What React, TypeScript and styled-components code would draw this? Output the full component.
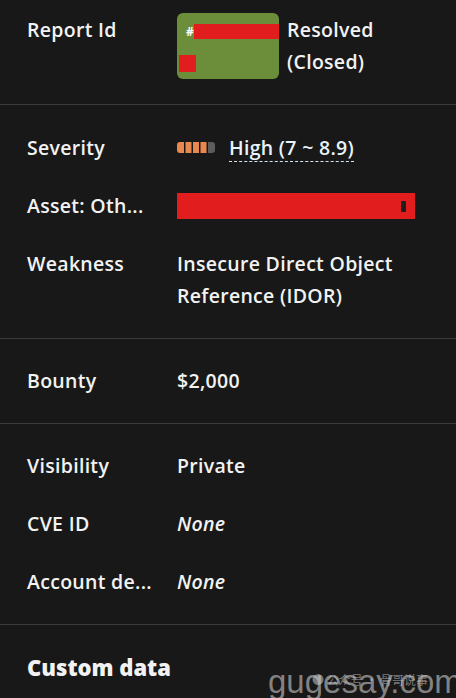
import React from "react";
import styled, { createGlobalStyle } from "styled-components";

const Global = createGlobalStyle`
  html, body { margin: 0; padding: 0; background: #181818; }
  body { font-family: "Open Sans", Lato, sans-serif; color: #f2f2f2; }
  * { box-sizing: border-box; }
`;

const Page = styled.div`
  position: relative;
  width: 456px;
  height: 698px;
  overflow: hidden;
  background: #181818;
`;

const Section = styled.div<{ $top?: number; $bottom?: number }>`
  display: flex;
  flex-direction: column;
  gap: 26px;
  padding: ${(p) => p.$top ?? 27}px 27px ${(p) => p.$bottom ?? 26}px 27px;
  border-bottom: 1px solid #3b3b3b;
  &:last-child { border-bottom: none; }
`;

const Row = styled.div`
  display: flex;
  align-items: flex-start;
  font-size: 19.5px;
  line-height: 32px;
  font-weight: 600;
  letter-spacing: 0.3px;
`;

const Label = styled.div<{ $pt?: number }>`
  width: 150px;
  flex: none;
  padding-top: ${(p) => p.$pt ?? 0}px;
  white-space: nowrap;
`;

const Value = styled.div<{ $italic?: boolean }>`
  flex: 1;
  font-style: ${(p) => (p.$italic ? "italic" : "normal")};
  display: flex;
  align-items: center;
  gap: 14px;
`;

const Badge = styled.div`
  width: 102px;
  height: 66px;
  background: #6c8e3a;
  border-radius: 6px;
  display: flex;
  flex-direction: column;
  padding: 11px 3px 7px 2px;
  gap: 16px;
`;

const IdLine = styled.div`
  display: flex;
  align-items: center;
  height: 15px;
  padding-left: 7px;
  font-size: 12px;
  font-weight: 700;
  color: #fff;
`;

const Redact = styled.div<{ $w: number; $h: number }>`
  width: ${(p) => p.$w}px;
  height: ${(p) => p.$h}px;
  background: #e21d1d;
  flex: none;
`;

const StatusText = styled.div`
  margin-left: 8px;
  padding-top: 1px;
  line-height: 32px;
`;

const Dashed = styled.span`
  color: #e8f3fb;
  line-height: 24px;
  padding-top: 4px;
  padding-bottom: 1px;
  border-bottom: 1px dashed #d8e4ee;
`;

const AssetBar = styled.div`
  width: 238px;
  height: 26px;
  margin-top: 3px;
  background: #e21d1d;
  display: flex;
  align-items: center;
  justify-content: flex-end;
  padding-right: 9px;
`;

const Notch = styled.div`
  width: 5px;
  height: 11px;
  border-radius: 1px;
  background: #1e1e1e;
`;

const Heading = styled.div`
  font-size: 22px;
  font-weight: 800;
  line-height: 32px;
`;

const Watermark = styled.div`
  position: absolute;
  left: 268px;
  bottom: -3px;
  font-family: "Liberation Sans", Arial, sans-serif;
  font-size: 33px;
  color: rgba(150, 150, 150, 0.85);
  white-space: nowrap;
`;

const WeChat = styled.div`
  position: absolute;
  left: 312px;
  top: 671px;
  display: flex;
  align-items: center;
  gap: 4px;
  font-family: "Noto Sans CJK SC", sans-serif;
  font-size: 12px;
  color: rgba(210, 210, 210, 0.55);
  white-space: nowrap;
`;

const SeverityIcon = () => (
  <svg width="38" height="11" viewBox="0 0 38 11">
    <rect x="0" y="0" width="7" height="11" rx="3" fill="#e8884e" />
    <rect x="3" y="0" width="4" height="11" fill="#e8884e" />
    <rect x="8.5" y="0" width="6" height="11" fill="#e8884e" />
    <rect x="16" y="0" width="6" height="11" fill="#e8884e" />
    <rect x="23.5" y="0" width="6" height="11" fill="#e8884e" />
    <rect x="31" y="0" width="7" height="11" rx="3" fill="#5c5c5c" />
    <rect x="31" y="0" width="4" height="11" fill="#5c5c5c" />
  </svg>
);

export default function App() {
  return (
    <Page>
      <Global />
      <Section $top={13} $bottom={25}>
        <Row>
          <Label $pt={1}>Report Id</Label>
          <Badge>
            <IdLine>
              #<Redact $w={85} $h={15} />
            </IdLine>
            <Redact $w={17} $h={17} />
          </Badge>
          <StatusText>
            Resolved
            <br />
            (Closed)
          </StatusText>
        </Row>
      </Section>
      <Section>
        <Row>
          <Label>Severity</Label>
          <Value>
            <SeverityIcon />
            <Dashed>High (7 ~ 8.9)</Dashed>
          </Value>
        </Row>
        <Row>
          <Label>Asset: Oth...</Label>
          <Value>
            <AssetBar>
              <Notch />
            </AssetBar>
          </Value>
        </Row>
        <Row>
          <Label>Weakness</Label>
          <Value>
            Insecure Direct Object
            <br />
            Reference (IDOR)
          </Value>
        </Row>
      </Section>
      <Section $top={26}>
        <Row>
          <Label>Bounty</Label>
          <Value>$2,000</Value>
        </Row>
      </Section>
      <Section $top={26}>
        <Row>
          <Label>Visibility</Label>
          <Value>Private</Value>
        </Row>
        <Row>
          <Label>CVE ID</Label>
          <Value $italic>None</Value>
        </Row>
        <Row>
          <Label>Account de...</Label>
          <Value $italic>None</Value>
        </Row>
      </Section>
      <Section $top={26}>
        <Heading>Custom data</Heading>
      </Section>
      <Watermark>gugesay.com</Watermark>
      <WeChat>● 公众号 · 骨哥说事</WeChat>
    </Page>
  );
}
